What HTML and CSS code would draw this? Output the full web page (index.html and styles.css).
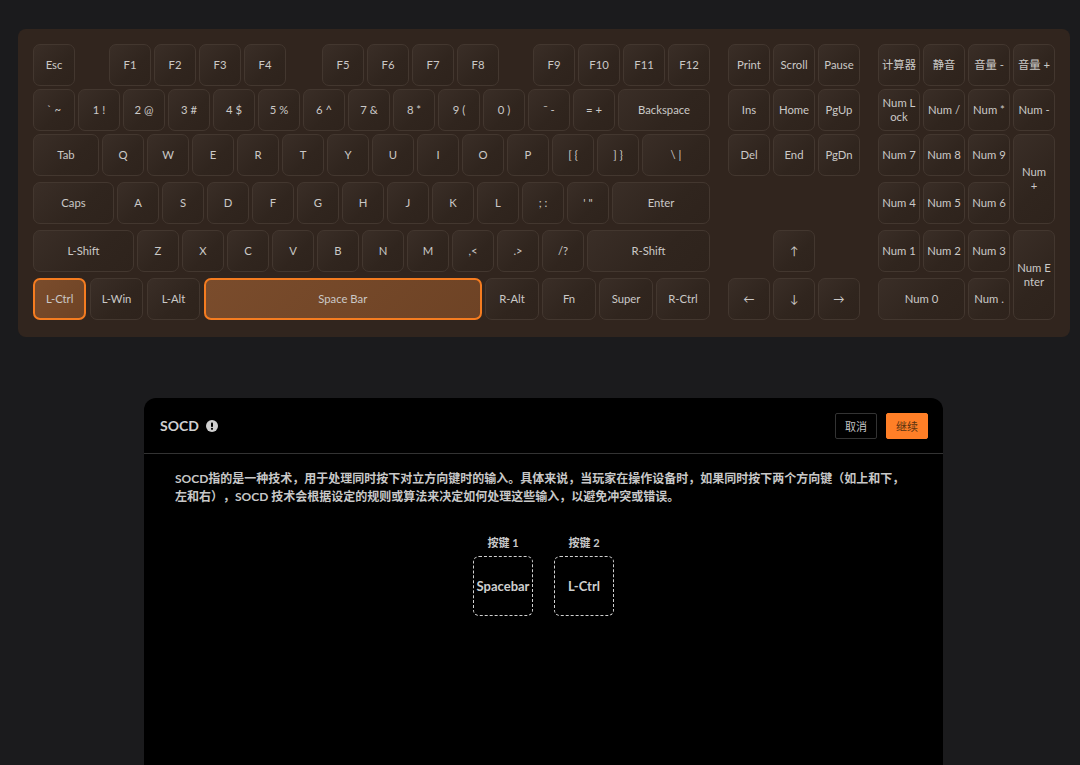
FILE: index.html
```html
<!DOCTYPE html>
<html lang="zh-CN">
<head>
  <meta charset="UTF-8">
  <meta name="viewport" content="width=device-width, initial-scale=1.0">
  <title>SOCD</title>
  <link rel="stylesheet" href="styles.css">
</head>
<body>
  <div class="keyboard">
    <div class="main-keys">
      <div class="row">
        <div class="key">Esc</div>
        <div class="key gap-f1">F1</div>
        <div class="key">F2</div>
        <div class="key">F3</div>
        <div class="key">F4</div>
        <div class="key gap-f5">F5</div>
        <div class="key">F6</div>
        <div class="key">F7</div>
        <div class="key">F8</div>
        <div class="key gap-f9">F9</div>
        <div class="key">F10</div>
        <div class="key">F11</div>
        <div class="key">F12</div>
      </div>
      <div class="row">
        <div class="key">` ~</div>
        <div class="key">1 !</div>
        <div class="key">2 @</div>
        <div class="key">3 #</div>
        <div class="key">4 $</div>
        <div class="key">5 %</div>
        <div class="key">6 ^</div>
        <div class="key">7 &amp;</div>
        <div class="key">8 *</div>
        <div class="key">9 (</div>
        <div class="key">0 )</div>
        <div class="key">ˉ -</div>
        <div class="key">= +</div>
        <div class="key fill">Backspace</div>
      </div>
      <div class="row">
        <div class="key w-tab">Tab</div>
        <div class="key">Q</div>
        <div class="key">W</div>
        <div class="key">E</div>
        <div class="key">R</div>
        <div class="key">T</div>
        <div class="key">Y</div>
        <div class="key">U</div>
        <div class="key">I</div>
        <div class="key">O</div>
        <div class="key">P</div>
        <div class="key">[ {</div>
        <div class="key">] }</div>
        <div class="key fill">\ |</div>
      </div>
      <div class="row low">
        <div class="key w-caps">Caps</div>
        <div class="key">A</div>
        <div class="key">S</div>
        <div class="key">D</div>
        <div class="key">F</div>
        <div class="key">G</div>
        <div class="key">H</div>
        <div class="key">J</div>
        <div class="key">K</div>
        <div class="key">L</div>
        <div class="key">; :</div>
        <div class="key">' "</div>
        <div class="key fill">Enter</div>
      </div>
      <div class="row low">
        <div class="key w-shift">L-Shift</div>
        <div class="key">Z</div>
        <div class="key">X</div>
        <div class="key">C</div>
        <div class="key">V</div>
        <div class="key">B</div>
        <div class="key">N</div>
        <div class="key">M</div>
        <div class="key">,&lt;</div>
        <div class="key">.&gt;</div>
        <div class="key">/?</div>
        <div class="key fill">R-Shift</div>
      </div>
      <div class="row low row-bottom">
        <div class="key w-mod active">L-Ctrl</div>
        <div class="key w-mod">L-Win</div>
        <div class="key w-mod">L-Alt</div>
        <div class="key fill active">Space Bar</div>
        <div class="key w-mod2">R-Alt</div>
        <div class="key w-mod2">Fn</div>
        <div class="key w-mod2">Super</div>
        <div class="key w-mod2">R-Ctrl</div>
      </div>
    </div>

    <div class="nav-keys">
      <div class="key">Print</div>
      <div class="key">Scroll</div>
      <div class="key">Pause</div>
      <div class="key">Ins</div>
      <div class="key">Home</div>
      <div class="key">PgUp</div>
      <div class="key">Del</div>
      <div class="key">End</div>
      <div class="key">PgDn</div>
      <div class="key low arrow-up">↑</div>
      <div class="key low arrow-bottom">←</div>
      <div class="key low arrow-bottom">↓</div>
      <div class="key low arrow-bottom">→</div>
    </div>

    <div class="num-keys">
      <div class="key">计算器</div>
      <div class="key">静音</div>
      <div class="key">音量 -</div>
      <div class="key">音量 +</div>
      <div class="key">Num L<br>ock</div>
      <div class="key">Num /</div>
      <div class="key">Num *</div>
      <div class="key">Num -</div>
      <div class="key">Num 7</div>
      <div class="key">Num 8</div>
      <div class="key">Num 9</div>
      <div class="key num-plus">Num<br>+</div>
      <div class="key low">Num 4</div>
      <div class="key low">Num 5</div>
      <div class="key low">Num 6</div>
      <div class="key low">Num 1</div>
      <div class="key low">Num 2</div>
      <div class="key low">Num 3</div>
      <div class="key low num-enter">Num E<br>nter</div>
      <div class="key low num-zero">Num 0</div>
      <div class="key low">Num .</div>
    </div>
  </div>

  <div class="dialog">
    <div class="dialog-header">
      <div class="dialog-title">
        SOCD
        <svg class="info-icon" viewBox="0 0 12 12" width="12" height="12">
          <circle cx="6" cy="6" r="6" fill="#d0d0d0"/>
          <rect x="5" y="2.4" width="2" height="4.6" rx="0.8" fill="#000"/>
          <circle cx="6" cy="8.8" r="1.1" fill="#000"/>
        </svg>
      </div>
      <div class="dialog-actions">
        <button class="btn">取消</button>
        <button class="btn btn-primary">继续</button>
      </div>
    </div>
    <div class="dialog-body">
      <p class="desc">SOCD指的是一种技术，用于处理同时按下对立方向键时的输入。具体来说，当玩家在操作设备时，如果同时按下两个方向键（如上和下，左和右），SOCD 技术会根据设定的规则或算法来决定如何处理这些输入，以避免冲突或错误。</p>
      <div class="slots">
        <div class="slot">
          <div class="slot-label">按键 1</div>
          <div class="slot-box">Spacebar</div>
        </div>
        <div class="slot">
          <div class="slot-label">按键 2</div>
          <div class="slot-box">L-Ctrl</div>
        </div>
      </div>
    </div>
  </div>
</body>
</html>
```

FILE: styles.css
```css
body {
  margin: 0;
  height: 765px;
  padding: 29px 10px 0 18px;
  box-sizing: border-box;
  overflow: hidden;
  font-family: "Lato", "Noto Sans CJK SC", sans-serif;
  background-color: #1b1b1d;
  color: #cfcfcf;
}

/* keyboard */
.keyboard {
  display: flex;
  height: 308px;
  box-sizing: border-box;
  padding: 15px;
  border-radius: 8px;
  background-color: #31251e;
}

.main-keys {
  width: 677px;
  display: flex;
  flex-direction: column;
  gap: 3px;
}

.row {
  display: flex;
  gap: 3px;
}

.row.low {
  margin-top: 3px;
}

.key {
  flex: none;
  width: 42px;
  height: 42px;
  box-sizing: border-box;
  display: flex;
  align-items: center;
  justify-content: center;
  text-align: center;
  font-size: 11.3px;
  line-height: 14px;
  color: #cbc9c7;
  border: 1px solid #43372f;
  border-radius: 7px;
  background: linear-gradient(135deg, #3a2e27 0%, #30251e 60%, #2e231c 100%);
}

.key.active {
  border: 2px solid #f57c20;
  background: linear-gradient(135deg, #7a4c2c 0%, #6e4325 100%);
}

.key.fill {
  flex: 1;
}

.gap-f1 { margin-left: 31px; }
.gap-f5 { margin-left: 33px; }
.gap-f9 { margin-left: 31px; }

.w-tab { width: 66px; }
.w-caps { width: 81px; }
.w-shift { width: 101px; }
.w-mod { width: 53.4px; }
.w-mod2 { width: 54px; }

.row-bottom .w-mod + .fill { margin-left: 0.4px; }
.row-bottom .w-mod + .w-mod { margin-left: 0.5px; }

.nav-keys {
  width: 132px;
  margin-left: 18px;
  display: grid;
  grid-template-columns: repeat(3, 42px);
  grid-template-rows: 42px 42px 42px 45px 45px 45px;
  gap: 3px;
  align-content: start;
}

.nav-keys .low {
  margin-top: 3px;
}

.arrow-up {
  grid-row: 5;
  grid-column: 2;
}

.arrow-bottom {
  grid-row: 6;
}

.num-keys {
  width: 177px;
  margin-left: 18px;
  display: grid;
  grid-template-columns: repeat(4, 42px);
  grid-template-rows: 42px 42px 42px 45px 45px 45px;
  gap: 3px;
  align-content: start;
}

.num-keys .low {
  margin-top: 3px;
}

.num-plus {
  grid-column: 4;
  grid-row: 3 / span 2;
  height: 90px;
}

.num-enter {
  grid-column: 4;
  grid-row: 5 / span 2;
  height: 90px;
}

.num-zero {
  grid-column: 1 / span 2;
  width: 87px;
}

/* dialog */
.dialog {
  width: 799px;
  height: 367px;
  margin: 61px 0 0 126px;
  border-radius: 12px 12px 0 0;
  background-color: #000;
}

.dialog-header {
  height: 56px;
  box-sizing: border-box;
  padding: 0 15px 0 16px;
  display: flex;
  align-items: center;
  justify-content: space-between;
  border-bottom: 1px solid #333;
}

.dialog-title {
  display: flex;
  align-items: center;
  gap: 7px;
  font-size: 14px;
  font-weight: 700;
  color: #d0d0d0;
}

.dialog-actions {
  display: flex;
  gap: 9px;
}

.btn {
  width: 42px;
  height: 26px;
  padding: 0;
  font-family: inherit;
  font-size: 11px;
  color: #c4c4c4;
  background-color: #000;
  border: 1px solid #333;
  border-radius: 2px;
}

.btn-primary {
  color: #5c3310;
  background-color: #ff7f27;
  border-color: #ff7f27;
}

.dialog-body {
  padding: 16px 31px 0;
}

.desc {
  margin: 0 7px 0 0;
  font-size: 12px;
  font-weight: 700;
  line-height: 18px;
  color: #c8c8c8;
  text-spacing-trim: space-all;
}

.slots {
  margin-top: 29px;
  display: flex;
  justify-content: center;
  gap: 21px;
}

.slot-label {
  font-size: 11px;
  font-weight: 700;
  line-height: 16px;
  text-align: center;
  color: #c8c8c8;
}

.slot-box {
  width: 60px;
  height: 60px;
  margin-top: 5px;
  box-sizing: border-box;
  display: flex;
  align-items: center;
  justify-content: center;
  font-size: 13px;
  font-weight: 700;
  color: #cfcfcf;
  border: 1px dashed #d0d0d0;
  border-radius: 6px;
}
```
